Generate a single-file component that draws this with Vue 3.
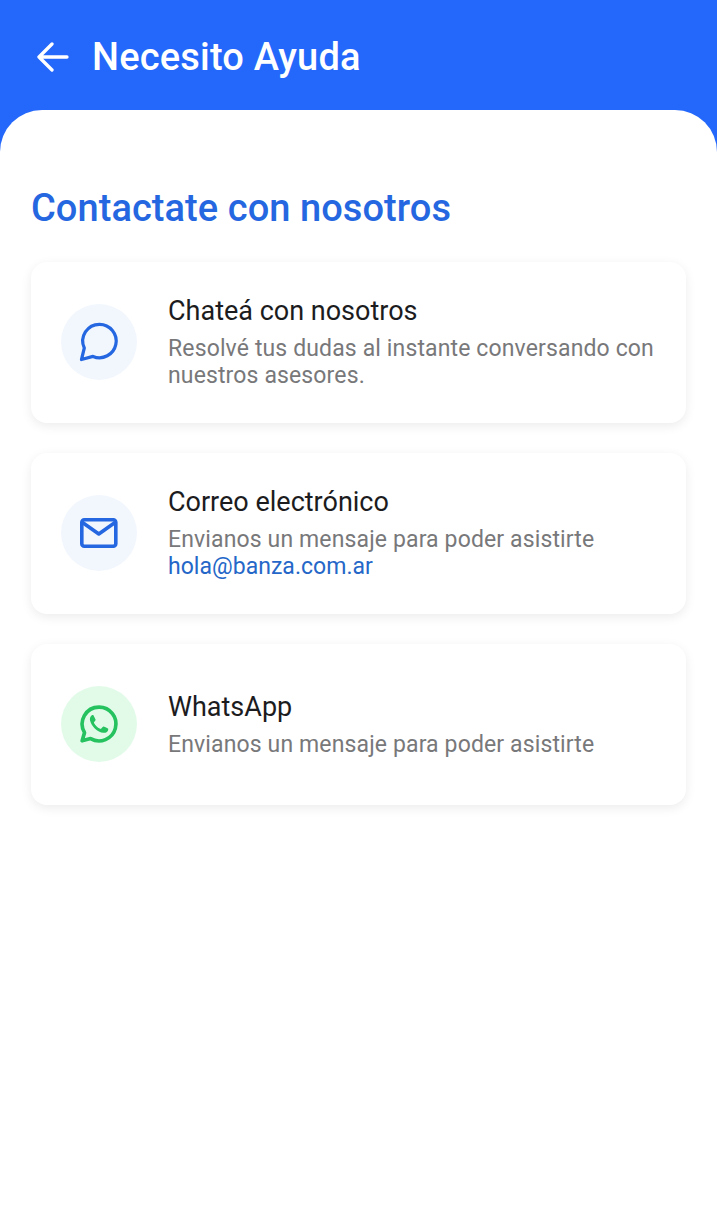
<script setup>
const waPath = 'M12 3.2a8.8 8.8 0 0 0-7.55 13.3L3.2 20.8l4.4-1.2A8.8 8.8 0 1 0 12 3.2z'
</script>

<template>
  <div class="page">
    <header class="top">
      <svg class="back" width="34" height="30" viewBox="0 0 34 30" fill="none" stroke="#fff" stroke-width="3.3" stroke-linecap="round" stroke-linejoin="round">
        <path d="M31 15H3M16 2 3 15l13 13" />
      </svg>
      <h1>Necesito Ayuda</h1>
    </header>
    <main class="panel">
      <h2>Contactate con nosotros</h2>
      <section class="card">
        <div class="circle">
          <svg width="44" height="44" viewBox="0 0 44 44" fill="none" stroke="#2567E0" stroke-width="3.2" stroke-linejoin="round" stroke-linecap="round">
            <path d="M22.5 4.3a16.7 16.7 0 1 1-6.5 32.1L4.500 39.500 7.300 28A16.7 16.7 0 0 1 22.500 4.300z" />
          </svg>
        </div>
        <div class="text tall">
          <h3>Chateá con nosotros</h3>
          <p>Resolvé tus dudas al instante conversando con nuestros asesores.</p>
        </div>
      </section>
      <section class="card">
        <div class="circle">
          <svg width="44" height="44" viewBox="0 0 44 44" fill="none" stroke="#2567E0" stroke-width="3.6" stroke-linejoin="round" stroke-linecap="round">
            <rect x="4.800" y="8.800" width="34" height="26.400" rx="2.500" />
            <path d="M5.500 11.500 21.800 23 38 11.500" />
          </svg>
        </div>
        <div class="text tall">
          <h3>Correo electrónico</h3>
          <p>Envianos un mensaje para poder asistirte</p>
          <a>hola@banza.com.ar</a>
        </div>
      </section>
      <section class="card">
        <div class="circle green">
          <svg width="46" height="46" viewBox="0 0 24 24" fill="none">
            <path :d="waPath" stroke="#25C25F" stroke-width="1.900" stroke-linejoin="round" />
            <path d="M9.100 7.400c-.3-.1-.7-.1-1 .2-.7.7-1 1.500-.8 2.500.3 1.500 1.200 2.900 2.500 4.200 1.400 1.300 2.900 2.200 4.500 2.300 1 .1 1.800-.3 2.300-1 .2-.3.300-.8.200-1.100-.1-.2-1.900-1.100-2.200-1.200-.3-.1-.5 0-.7.200l-.7.900c-.2.200-.4.200-.6.100-1.500-.7-2.500-1.700-3.200-3-.1-.2-.1-.4.100-.6l.6-.7c.2-.2.200-.4.100-.6l-1.100-2.200z" fill="#25C25F" />
          </svg>
        </div>
        <div class="text">
          <h3>WhatsApp</h3>
          <p>Envianos un mensaje para poder asistirte</p>
        </div>
      </section>
    </main>
  </div>
</template>

<style>
html, body { margin: 0; background: #fff; }
</style>

<style scoped>
.page {
  width: 717px;
  height: 1206px;
  overflow: hidden;
  background: #2468FB;
  font-family: Roboto, "Liberation Sans", sans-serif;
}
.top {
  height: 110px;
  display: flex;
  align-items: center;
  padding-left: 36px;
  gap: 22px;
  box-sizing: border-box;
}
.back { flex: none; margin-top: 4px; }
h1 {
  margin: 0;
  color: #fff;
  font-size: 38px;
  font-weight: 500;
  letter-spacing: 0.2px;
  line-height: 42px;
  position: relative;
  top: 2px;
}
.panel {
  height: 1096px;
  background: #fff;
  border-radius: 42px 42px 0 0;
  padding: 76px 31px 0;
  box-sizing: border-box;
}
h2 {
  margin: 0 0 31px;
  color: #2567E0;
  font-size: 38px;
  font-weight: 500;
  letter-spacing: 0.06px;
  line-height: 45px;
}
.card {
  height: 161px;
  margin-bottom: 30px;
  box-sizing: border-box;
  width: 655px;
  padding-left: 30px;
  display: flex;
  align-items: center;
  gap: 31px;
  border-radius: 16px;
  background: #fff;
  box-shadow: 0 3px 11px rgba(0, 0, 0, 0.08);
}
.circle {
  flex: none;
  width: 76px;
  height: 76px;
  margin-top: -2px;
  border-radius: 50%;
  background: #F2F7FE;
  display: flex;
  align-items: center;
  justify-content: center;
}
.circle.green { background: #E2FBE9; }
.text { width: 490px; }
.text.tall { margin-top: -2px; }
h3 {
  margin: 0 0 8px;
  color: #1C1C1E;
  font-size: 27px;
  font-weight: 400;
  line-height: 32px;
}
p, a {
  margin: 0;
  display: block;
  color: #78787A;
  font-size: 23px;
  letter-spacing: 0.13px;
  line-height: 27px;
}
a { color: #2567C8; letter-spacing: 0.03px; }
</style>
